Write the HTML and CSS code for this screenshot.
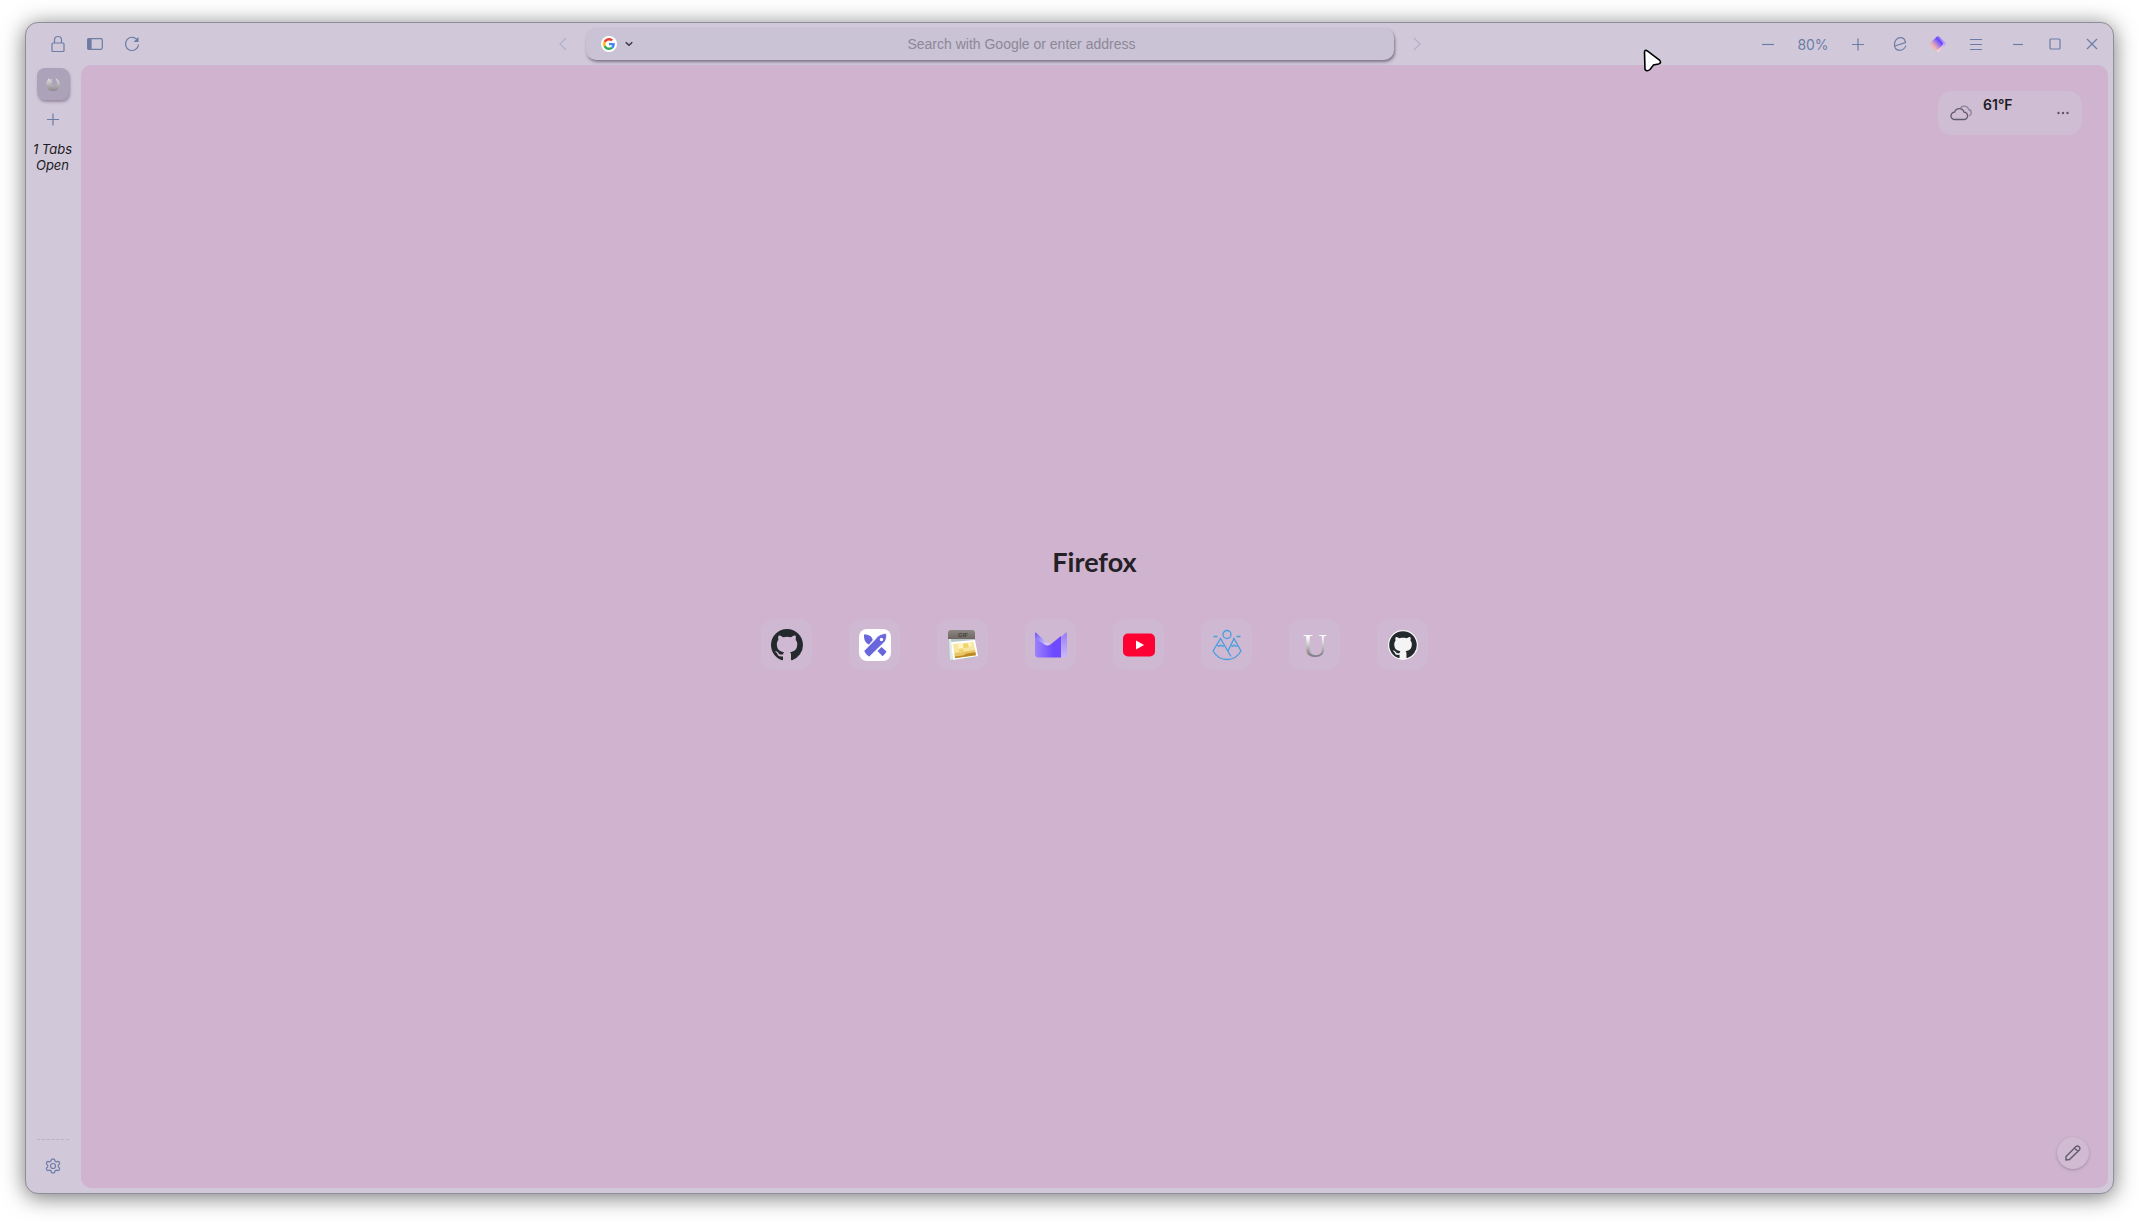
FILE: index.html
```html
<!DOCTYPE html>
<html lang="en">
<head>
<meta charset="utf-8">
<title>New Tab</title>
<link rel="stylesheet" href="styles.css">
</head>
<body>
<div class="window">
  <header class="toolbar">
    <div class="group group-left">
      <button class="tool" aria-label="Lock"><svg width="16" height="18" viewBox="0 0 16 18"><rect x="2" y="8" width="12" height="8.500" rx="1"/><path d="M4.500 8V5a3.500 3.500 0 0 1 7 0v3"/></svg></button>
      <button class="tool" aria-label="Toggle sidebar"><svg width="16" height="16" viewBox="0 0 16 16"><rect x=".7" y="2.700" width="14.600" height="10.600" rx="1.200"/><path class="solid" d="M1 3h3v10H1z"/></svg></button>
      <button class="tool" aria-label="Reload"><svg width="16" height="16" viewBox="0 0 16 16"><path d="M13.700 4.500A6.600 6.600 0 1 0 14.600 8.500"/><path class="solid" d="M14.500 1v5h-5z" stroke="none"/></svg></button>
    </div>
    <div class="space-before"></div>
    <div class="navigation">
      <button class="tool step" aria-label="Back"><svg width="8" height="14" viewBox="0 0 8 14"><path d="M7 1 1 7l6 6"/></svg></button>
      <div class="urlbar">
        <button class="engine" aria-label="Search engine">
          <svg width="16" height="16" viewBox="0 0 48 48"><circle cx="24" cy="24" r="24" fill="#fff"/><g transform="translate(6 6) scale(.75)"><path fill="#ea4335" d="M24 9.500c3.540 0 6.710 1.220 9.210 3.600l6.850-6.850C35.900 2.380 30.470 0 24 0 14.620 0 6.510 5.380 2.560 13.220l7.980 6.190C12.430 13.720 17.740 9.500 24 9.500z"/><path fill="#4285f4" d="M46.980 24.550c0-1.570-.15-3.090-.38-4.550H24v9.020h12.940c-.58 2.960-2.260 5.480-4.780 7.180l7.730 6c4.510-4.180 7.090-10.360 7.090-17.650z"/><path fill="#fbbc05" d="M10.530 28.590a14.500 14.500 0 0 1 0-9.180l-7.980-6.190a24 24 0 0 0 0 21.560l7.980-6.190z"/><path fill="#34a853" d="M24 48c6.480 0 11.930-2.130 15.890-5.810l-7.730-6c-2.150 1.450-4.920 2.300-8.160 2.300-6.260 0-11.570-4.220-13.470-9.910l-7.980 6.190C6.510 42.620 14.620 48 24 48z"/></g></svg>
          <svg width="8" height="6" viewBox="0 0 8 6"><path d="m.7 1.200 3.300 3 3.300-3" fill="none" stroke="#3a3740" stroke-width="1.500"/></svg>
        </button>
        <input class="address" type="text" aria-label="Address" placeholder="Search with Google or enter address">
      </div>
      <button class="tool step" aria-label="Forward"><svg width="8" height="14" viewBox="0 0 8 14"><path d="m1 1 6 6-6 6"/></svg></button>
    </div>
    <div class="space-after"></div>
    <div class="group group-right">
      <div class="group zoom-controls">
        <button class="tool" aria-label="Zoom out"><svg width="14" height="14" viewBox="0 0 14 14"><path d="M1 7.500h12"/></svg></button>
        <button class="zoom-level">80%</button>
        <button class="tool" aria-label="Zoom in"><svg width="14" height="14" viewBox="0 0 14 14"><path d="M1 7.500h12M7 1.500v12"/></svg></button>
      </div>
      <div class="group extensions">
        <button class="tool" aria-label="Extension"><svg width="14" height="14" viewBox="0 0 14 14"><path d="M1 9.200 12.500 5.500C12 2.500 9.700 .7 7.500 .7 4 .7 1.500 3.700 1.500 7.600c0 3.400 2 5.700 5 5.700 2.500 0 5.200-1.700 6.400-4.700"/></svg></button>
        <button class="tool" aria-label="Proton"><svg class="art" width="16" height="16" viewBox="0 0 16 16"><defs><linearGradient id="gem" x1=".7" y1=".7" x2=".3" y2="1.100" gradientTransform="translate(0 -.4)"><stop offset="0" stop-color="#6d4aff"/><stop offset=".5" stop-color="#b085dc"/><stop offset="1" stop-color="#f5b3ae"/></linearGradient><linearGradient id="gem-edge" x1="0" y1="0" x2="0" y2="1"><stop offset="0" stop-color="#7c5cff"/><stop offset=".5" stop-color="#bda5f7"/><stop offset="1" stop-color="#ffe2d0"/></linearGradient></defs><path fill="url(#gem-edge)" d="M6.800.7Q8-.4 9.200.7l6.100 6.100q1.100 1.200 0 2.400l-6.100 6.100q-1.200 1.100-2.400 0L.7 9.200Q-.4 8 .7 6.800z"/><path fill="url(#gem)" d="M6.800.7 12.300 6q1.500 1.500 0 3l-5 5.500q-.5.700-1 .3L.7 9.200Q-.4 8 .7 6.800z"/></svg></button>
        <button class="tool" aria-label="Menu"><svg width="14" height="14" viewBox="0 0 14 14"><path d="M1 2.500h12M1 7.500h12M1 12.500h12"/></svg></button>
      </div>
      <div class="group window-controls">
        <button class="tool" aria-label="Minimize"><svg width="12" height="12" viewBox="0 0 12 12"><path d="M1 6.500h10"/></svg></button>
        <button class="tool" aria-label="Maximize"><svg width="12" height="12" viewBox="0 0 12 12"><rect x="1" y="1" width="10" height="10" rx="1"/></svg></button>
        <button class="tool" aria-label="Close"><svg width="12" height="12" viewBox="0 0 12 12"><path d="m1 1 10 10M11 1 1 11"/></svg></button>
      </div>
    </div>
  </header>

  <aside class="sidebar">
    <button class="tab" aria-label="New Tab"><svg width="14" height="14" viewBox="0 0 14 14"><defs><linearGradient id="fox" x1="0" y1="0" x2="0" y2="1"><stop offset="0" stop-color="#e2dfdf"/><stop offset="1" stop-color="#8c898c"/></linearGradient></defs><path fill="url(#fox)" d="M1.500 3.200 2.600 1l.9 1.400L5.800 2l-.5 1.600 1.400 1.200-1.900 1.400c-.3 1.200.8 1.700 2 1.400L8 8.200 6.200 9.700c2.400 1 5-.5 5-3.200 0-2.100-1.300-3.800-1.700-5.300C12 2.300 14 4.500 14 7.200A7 7 0 0 1 0 7.200c0-1.500.6-2.900 1.500-4z"/></svg></button>
    <button class="tool new-tab" aria-label="Open a new tab"><svg width="14" height="14" viewBox="0 0 14 14"><path d="M1 7.500h12M7 1.500v12"/></svg></button>
    <p class="tab-count">1 Tabs Open</p>
    <div class="sidebar-end">
      <button class="tool settings" aria-label="Settings"><svg width="16" height="16" viewBox="0 0 16 16"><path d="M6.500 1.400Q8 .3 9.500 1.400l.5 1.700 1.200.7 1.900-.5q1.600.7 1.500 2.500L13.300 7.200v1.600l1.300 1.400q.1 1.800-1.500 2.500l-1.900-.5-1.200.7-.5 1.700q-1.500 1.100-3 0L6 12.900l-1.200-.7-1.900.5q-1.600-.7-1.500-2.500l1.300-1.400V7.200L1.400 5.800q-.1-1.800 1.500-2.500l1.900.5L6 3.100z"/><circle cx="8" cy="8" r="2.500"/></svg></button>
    </div>
  </aside>

  <main class="content">
    <section class="weather">
      <svg width="24" height="16" viewBox="0 0 24 16"><path class="cloud-far" d="M10.500 2.800A4.800 4.800 0 0 1 18.800 4.500a3.400 3.400 0 0 1 .2 6.500"/><path class="cloud" d="M4.800 14.500a3.700 3.700 0 0 1-.2-7.400 4.900 4.900 0 0 1 9.400 0 3.700 3.700 0 0 1-.2 7.400z"/></svg>
      <span class="temperature">61°F</span>
      <button class="more" aria-label="Weather options"><svg width="12" height="4" viewBox="0 0 12 4"><circle cx="1.500" cy="2" r="1.200"/><circle cx="6" cy="2" r="1.200"/><circle cx="10.500" cy="2" r="1.200"/></svg></button>
    </section>

    <section class="start">
      <h1 class="wordmark">Firefox</h1>
      <nav class="shortcuts">
        <a class="shortcut" href="#" aria-label="GitHub"><svg width="32" height="32" viewBox="0 0 16 16"><path fill="#24292e" d="M8 0C3.580 0 0 3.580 0 8c0 3.540 2.290 6.530 5.470 7.590.4.070.55-.17.55-.38 0-.19-.01-.82-.01-1.490-2.010.37-2.530-.49-2.690-.94-.09-.23-.48-.94-.82-1.130-.28-.15-.68-.52-.01-.53.630-.01 1.080.58 1.230.82.720 1.210 1.870.87 2.330.66.070-.52.280-.87.510-1.070-1.780-.2-3.640-.89-3.640-3.950 0-.87.310-1.590.82-2.150-.08-.2-.36-1.020.08-2.120 0 0 .67-.21 2.200.82.640-.18 1.320-.27 2-.27s1.360.09 2 .27c1.530-1.040 2.200-.82 2.200-.82.440 1.100.16 1.920.08 2.120.51.560.82 1.270.82 2.150 0 3.070-1.870 3.750-3.650 3.950.29.250.54.730.54 1.480 0 1.070-.01 1.930-.01 2.200 0 .21.150.46.550.38A8 8 0 0 0 16 8c0-4.420-3.580-8-8-8z"/></svg></a>
        <a class="shortcut" href="#" aria-label="Excalidraw"><svg width="32" height="32" viewBox="0 0 32 32"><rect width="32" height="32" rx="8" fill="#fff"/><g fill="#6965db"><path d="M5 5.500c4-.2 8 1.500 8.800 5.500L10 15.500C6 14 4.800 10 5 5.500zM18.500 22l4-4 5 4.500q-1.500 3-4 4.800z"/><path stroke="#fff" stroke-width=".8" d="M27.500 4.500c.3 4.500-.5 8-4 10.500L10.200 28Q6.500 26 4.800 22L17 9.500c2-3.500 6-5 10.500-5z"/></g><circle cx="22.500" cy="10.500" r="1.700" fill="#fff"/></svg></a>
        <a class="shortcut" href="#" aria-label="GIF"><svg width="32" height="32" viewBox="0 0 32 32"><defs><linearGradient id="gif-top" x1="0" y1="0" x2="0" y2="1"><stop offset="0" stop-color="#8c8782"/><stop offset="1" stop-color="#6f6862"/></linearGradient></defs><path fill="#b4c4c5" d="M1 10h27l-1 19-24 2-1-1z"/><path fill="#dfe9e8" d="m4 10 2 20-3 1L2 10z"/><path fill="url(#gif-top)" d="M1 4q0-3 3-3h21q3 0 3 3v6H1z"/><text x="11" y="8" class="gif-label">GIF</text><path fill="#fff" d="m4 13 24-2 3 16-25 4z"/><path fill="#f8e5a0" d="m6 15 20.500-2 2.500 13-21 3z"/><path fill="#fff4c4" d="m11 14.500 5-.5.700 5-5 .6zM21 13.500l3-.3.700 4-3 .4z"/><path fill="#e7c464" d="m7.500 24 20.500-3 1 5-21 3z"/><path fill="#bd8927" d="m7.900 27.500 8-1 4-2 8.500-1.300.6 3-21 3z"/><path fill="#f2d36d" d="m16 15 5-.5.500 4-5 .6zm-4 5 4-.5.500 4-4 .6z"/></svg></a>
        <a class="shortcut" href="#" aria-label="Proton Mail"><svg width="32" height="32" viewBox="0 0 32 32"><defs><linearGradient id="mail-flap" x1="0" y1="0" x2="1" y2="1"><stop offset="0" stop-color="#7058f5"/><stop offset=".7" stop-color="#d2c5f7"/></linearGradient><linearGradient id="mail-side" x1="0" y1="0" x2="0" y2="1"><stop offset="0" stop-color="#9b7df5"/><stop offset="1" stop-color="#c9b8fb"/></linearGradient><linearGradient id="mail-body" x1="0" y1="0" x2="1" y2="0"><stop offset="0" stop-color="#9c83fb"/><stop offset=".7" stop-color="#6d4aff"/></linearGradient></defs><path fill="url(#mail-side)" d="m26 8 4.500-4.200q1.500-1 1.500.7V25q0 3.500-3.500 3.500H26z"/><path fill="url(#mail-flap)" d="M0 4.500q0-1.800 1.500-.6L11 13q2 1.800 4 0l-3 8L0 12z"/><path fill="url(#mail-body)" d="M0 9 9.500 15.500q3 2.200 6 0L26 7v21.500H3.500Q0 28.500 0 25z"/></svg></a>
        <a class="shortcut" href="#" aria-label="YouTube"><svg width="32" height="32" viewBox="0 0 32 32"><rect y="4.500" width="32" height="23" rx="5" fill="#ff0033"/><path fill="#fff" d="m13 11.500 8 4.500-8 4.500z"/></svg></a>
        <a class="shortcut" href="#" aria-label="Mountains"><svg width="32" height="32" viewBox="0 0 32 32" fill="none" stroke="#459fdf" stroke-width="1.300"><circle cx="16" cy="5.500" r="4"/><path d="M2.500 7.500h4m19 0h4M2 22l7.500-12.500L20 27.500M17 22l6-12.500L30 22Q25 30.500 16 30.500T2 22M6 16l2 1.500 1.500-1.500 2 1.500 2-1.500m6 0 2 1.500 1.500-1.500 2 1.500 2-1.500"/></svg></a>
        <a class="shortcut" href="#" aria-label="U"><svg class="monogram" width="32" height="32" viewBox="0 0 32 32"><defs><linearGradient id="silver" x1="0" y1="0" x2="0" y2="1"><stop offset=".3" stop-color="#fafafa"/><stop offset=".75" stop-color="#858188"/></linearGradient></defs><text x="16" y="28" text-anchor="middle" class="letter-u">U</text></svg></a>
        <a class="shortcut" href="#" aria-label="GitHub profile"><svg width="32" height="32" viewBox="0 0 32 32"><circle cx="16" cy="16" r="15" fill="#f4f4f5"/><path transform="translate(2.200 2.200) scale(1.725)" fill="#24292e" d="M8 0C3.580 0 0 3.580 0 8c0 3.540 2.290 6.530 5.470 7.590.4.070.55-.17.55-.38 0-.19-.01-.82-.01-1.490-2.010.37-2.530-.49-2.690-.94-.09-.23-.48-.94-.82-1.130-.28-.15-.68-.52-.01-.53.630-.01 1.080.58 1.230.82.720 1.210 1.870.87 2.330.66.070-.52.280-.87.510-1.070-1.780-.2-3.640-.89-3.640-3.950 0-.87.310-1.590.82-2.150-.08-.2-.36-1.020.08-2.120 0 0 .67-.21 2.200.82.640-.18 1.320-.27 2-.27s1.360.09 2 .27c1.530-1.040 2.200-.82 2.200-.82.440 1.100.16 1.920.08 2.120.51.560.82 1.270.82 2.150 0 3.070-1.870 3.750-3.650 3.950.29.250.54.730.54 1.480 0 1.070-.01 1.930-.01 2.200 0 .21.150.46.550.38A8 8 0 0 0 16 8c0-4.420-3.580-8-8-8z"/></svg></a>
      </nav>
    </section>

    <button class="customize" aria-label="Customize"><svg width="16" height="16" viewBox="0 0 16 16"><path d="M1 15v-3.500L11 1.500q1.500-1.200 3 .2t.5 3L4.500 14.500zM9.500 3 13 6.500"/></svg></button>
  </main>
</div>
<svg class="pointer" width="19" height="23" viewBox="0 0 19 23"><path d="M1.500 3.200Q1.700.5 4 1.700L16.500 11q2.500 3-1 4l-5 1-3.500 4.500q-3 2.500-5 0z" fill="#fff" stroke="#000" stroke-width="1.600"/></svg>
</body>
</html>
```
FILE: styles.css
```css
* {
  box-sizing: border-box;
}

body {
  margin: 0;
  min-height: 100vh;
  padding: 22px 25px 28px;
  display: flex;
  background: #fff;
  font-family: Inter, "Liberation Sans", sans-serif;
  font-size: 14px;
  color: #1c1b22;
}

button {
  padding: 0;
  border: 0;
  background: none;
  font: inherit;
  color: inherit;
}

svg {
  display: block;
}

.window {
  flex: 1;
  display: grid;
  grid-template-columns: 55px 1fr;
  grid-template-rows: 42px 1fr;
  padding: 0 5px 5px 0;
  border: 1px solid #8f8d95;
  border-radius: 13px;
  background: #d1c9da;
  box-shadow: 0 3px 22px rgba(0, 0, 0, 0.55);
}

.toolbar {
  grid-column: 1 / -1;
  display: flex;
  align-items: center;
}

.group {
  display: flex;
  align-items: center;
}

.group-left {
  gap: 5px;
  padding-left: 16px;
}

.group-right {
  gap: 10px;
}

.zoom-controls {
  gap: 6px;
}

.extensions {
  gap: 6px;
}

.window-controls {
  gap: 5px;
}

.tool {
  display: grid;
  place-items: center;
  width: 32px;
  height: 32px;
  fill: none;
  stroke: #6c7da6;
  stroke-width: 1.2;
}

.solid {
  fill: #6c7da6;
}

.art {
  stroke: none;
}

.step {
  width: 22px;
  stroke: #b0b0ca;
}

.space-before {
  flex: 5;
}

.space-after {
  flex: 4;
}

.navigation {
  flex: 0 1 876px;
  display: flex;
  align-items: center;
  gap: 12px;
}

.urlbar {
  flex: 1;
  display: flex;
  height: 32px;
  border-radius: 10px;
  background: #cac3d6;
  box-shadow: 1px 2px 3px rgba(60, 45, 75, 0.55);
}

.engine {
  display: flex;
  align-items: center;
  gap: 8px;
  width: 62px;
  padding-left: 15px;
}

.address {
  flex: 1;
  min-width: 0;
  padding: 0;
  border: 0;
  background: none;
  font: 14px "Liberation Sans", sans-serif;
  text-align: center;
}

.address::placeholder {
  color: #8d8796;
  opacity: 1;
}

.zoom-level {
  width: 46px;
  color: #6c7da6;
}

.sidebar {
  display: flex;
  flex-direction: column;
  align-items: center;
  padding: 3px 2px 6px 0;
}

.tab {
  display: grid;
  place-items: center;
  width: 32px;
  height: 32px;
  border-radius: 8px;
  background: #aca2ba;
  box-shadow: 1px 2px 3px rgba(60, 45, 75, 0.4);
}

.new-tab {
  margin-top: 3px;
}

.tab-count {
  margin: 6px 0 0;
  font-size: 13px;
  font-style: italic;
  line-height: 16px;
  text-align: center;
}

.sidebar-end {
  margin-top: auto;
  padding-top: 10px;
  border-top: 1px dashed #b9b2c9;
}

.content {
  display: flex;
  flex-direction: column;
  padding: 26px;
  border-radius: 10px;
  background: #d0b3cf;
}

.weather {
  align-self: flex-end;
  display: flex;
  align-items: center;
  width: 144px;
  height: 44px;
  padding: 0 13px 0 12px;
  gap: 9px;
  border-radius: 14px;
  background: #cfbdd3;
}

.cloud,
.cloud-far {
  fill: none;
  stroke: #625b6b;
  stroke-width: 1.3;
}

.cloud-far {
  stroke: #8e8398;
}

.temperature {
  align-self: flex-start;
  padding-top: 5px;
  font-weight: 600;
  line-height: 17px;
}

.more {
  margin-left: auto;
  fill: #5b5566;
}

.start {
  flex: 1;
  display: flex;
  flex-direction: column;
  align-items: center;
  justify-content: center;
  padding-bottom: 56px;
}

.wordmark {
  margin: 0 0 41px;
  font-family: Lato, Inter, sans-serif;
  font-size: 27px;
  font-weight: 700;
  line-height: 32px;
  color: #242126;
}

.shortcuts {
  display: flex;
  gap: 37px;
}

.shortcut {
  display: grid;
  place-items: center;
  width: 51px;
  height: 51px;
  border-radius: 13px;
  background: #cfb8d1;
}

.gif-label {
  font: bold 6px "Liberation Sans", sans-serif;
  fill: #45403c;
}

.monogram {
  overflow: visible;
}

.letter-u {
  font: 34px "Liberation Serif", serif;
  fill: url(#silver);
}

.customize {
  align-self: flex-end;
  display: grid;
  place-items: center;
  width: 32px;
  height: 32px;
  margin: 0 -7px -7px 0;
  border-radius: 50%;
  background: #d0bbd3;
  box-shadow: 0 1px 3px rgba(60, 45, 75, 0.3);
  fill: none;
  stroke: #625b6b;
  stroke-width: 1.4;
}

.pointer {
  position: absolute;
  left: 1643px;
  top: 49px;
}
```
